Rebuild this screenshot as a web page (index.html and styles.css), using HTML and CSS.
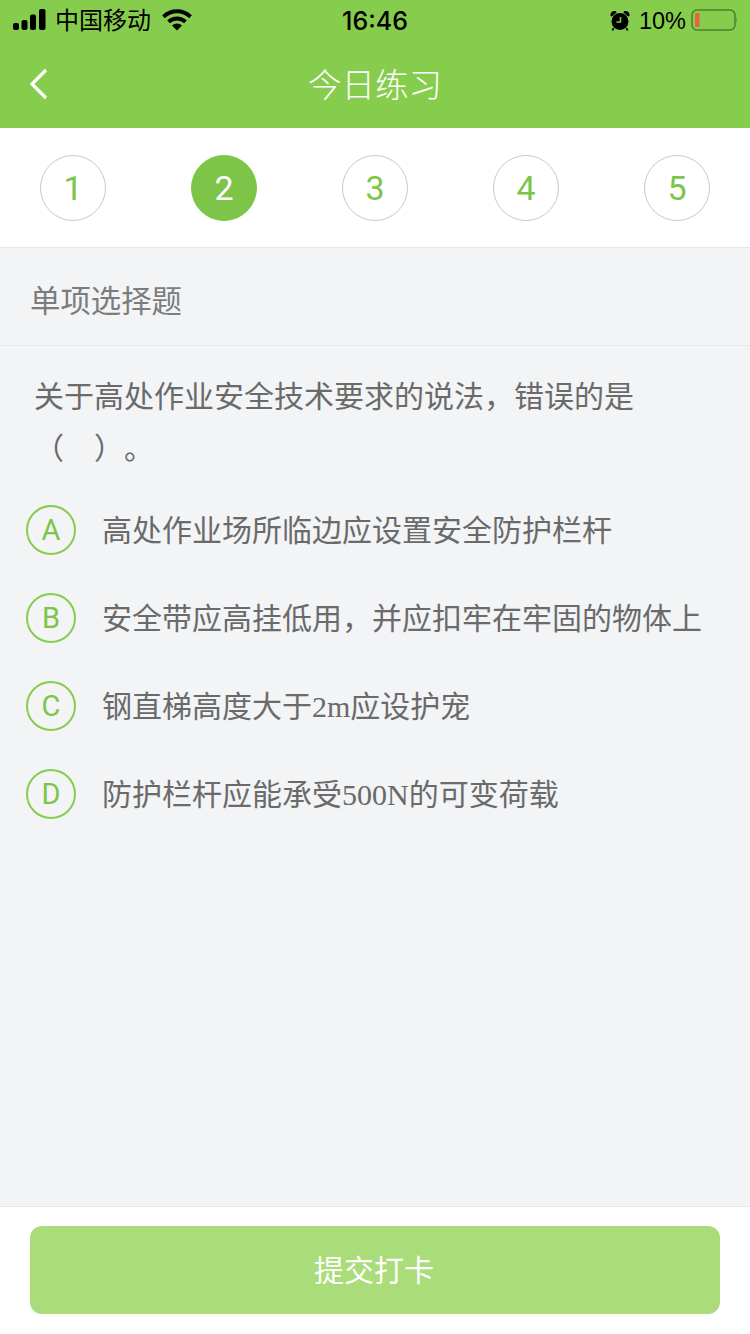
FILE: index.html
```html
<!DOCTYPE html>
<html lang="zh-CN">
<head>
    <meta charset="UTF-8">
    <meta name="viewport" content="width=device-width, initial-scale=1.0">
    <title>今日练习</title>
    <link rel="stylesheet" href="styles.css">
</head>
<body>
    <div class="page">
        <div class="header">
            <div class="status">
                <div class="status_left">
                    <svg class="signal" width="34" height="22" viewBox="0 0 34 22">
                        <rect x="0" y="14" width="6" height="7" rx="2"/>
                        <rect x="8.500" y="11" width="6" height="10" rx="2"/>
                        <rect x="17" y="5.500" width="6" height="15.500" rx="2"/>
                        <rect x="26" y="0" width="6.500" height="21" rx="2"/>
                    </svg>
                    <span class="carrier">中国移动</span>
                    <svg class="wifi" width="30" height="22" viewBox="0 0 30 22">
                        <path d="M1.500 7.800C9.500 .5 20.500 .5 28.500 7.800" fill="none" stroke="#000" stroke-width="4"/>
                        <path d="M6.500 12.800C11.500 8.300 18.500 8.300 23.500 12.800" fill="none" stroke="#000" stroke-width="4"/>
                        <path d="M10 16.500C13 13.800 17 13.800 20 16.500L15 21.500Z"/>
                    </svg>
                </div>
                <div class="time">16:46</div>
                <div class="status_right">
                    <svg class="alarm" width="20" height="21" viewBox="0 0 20 21">
                        <circle cx="10" cy="11.500" r="8.500"/>
                        <path d="M.5 6C0 2.500 2.500 .5 6 1L6.500 2.500 2 6.500Z"/>
                        <path d="M19.500 6C20 2.500 17.500 .5 14 1L13.500 2.500 18 6.500Z"/>
                        <path d="M3.500 18L2.500 20.500M16.500 18L17.500 20.500" stroke="#000" stroke-width="1.800"/>
                        <path d="M10.500 7V12H6.500" fill="none" stroke="#87cd4d" stroke-width="1.500"/>
                    </svg>
                    <span class="percent">10%</span>
                    <svg class="battery" width="46" height="22" viewBox="0 0 46 22">
                        <rect x="1" y="1" width="43" height="20" rx="5" fill="none" stroke="#4f7f2c" stroke-width="1.500"/>
                        <rect x="4" y="4" width="4.500" height="14" rx="1" fill="#e8643c"/>
                        <path d="M45.500 8C46.500 9 46.500 13 45.500 14Z" fill="#4f7f2c"/>
                    </svg>
                </div>
            </div>
            <div class="nav">
                <svg class="back" width="20" height="32" viewBox="0 0 20 32">
                    <path d="M17 2L3 16 17 30" fill="none" stroke="#fff" stroke-width="3.200"/>
                </svg>
                <div class="nav_title">今日练习</div>
            </div>
        </div>

        <div class="steps">
            <div class="step">1</div>
            <div class="step active">2</div>
            <div class="step">3</div>
            <div class="step">4</div>
            <div class="step">5</div>
        </div>

        <div class="main">
            <div class="type">单项选择题</div>
            <div class="question">关于高处作业安全技术要求的说法，错误的是<br>（　）。</div>
            <div class="options">
                <div class="option">
                    <div class="letter">A</div>
                    <div class="option_text">高处作业场所临边应设置安全防护栏杆</div>
                </div>
                <div class="option">
                    <div class="letter">B</div>
                    <div class="option_text">安全带应高挂低用，并应扣牢在牢固的物体上</div>
                </div>
                <div class="option">
                    <div class="letter">C</div>
                    <div class="option_text">钢直梯高度大于<span class="num">2m</span>应设护宠</div>
                </div>
                <div class="option">
                    <div class="letter">D</div>
                    <div class="option_text">防护栏杆应能承受<span class="num">500N</span>的可变荷载</div>
                </div>
            </div>
        </div>

        <div class="footer">
            <div class="submit">提交打卡</div>
        </div>
    </div>
</body>
</html>
```

FILE: styles.css
```css
*{
    box-sizing: border-box;
}
body{
    margin: 0;
    font-family: "Liberation Sans", "Noto Sans CJK SC", sans-serif;
    background: #f2f4f6;
}
.page{
    width: 750px;
    height: 1334px;
    display: flex;
    flex-direction: column;
    overflow: hidden;
}
.header{
    height: 128px;
    background: #87cd4d;
}
.status{
    height: 40px;
    padding: 0 13px;
    display: flex;
    align-items: center;
    color: #000;
}
.status_left,.status_right{
    flex: 1;
    display: flex;
    align-items: center;
}
.status_right{
    justify-content: flex-end;
}
.carrier{
    margin-left: 8px;
    padding-bottom: 4px;
    font-size: 24px;
}
.wifi{
    margin-left: 11px;
}
.time{
    width: 66px;
    padding-top: 2px;
    font-family: Inter, "Liberation Sans", sans-serif;
    font-size: 25px;
    font-weight: 500;
    text-align: center;
    white-space: nowrap;
}
.alarm{
    margin-right: 9px;
}
.percent{
    padding-top: 2px;
    font-size: 23.500px;
    margin-right: 5px;
}
.nav{
    height: 88px;
    padding: 0 0 0 29px;
    display: grid;
    grid-template-columns: 1fr auto 1fr;
    align-items: center;
    margin-right: 29px;
}
.nav_title{
    padding-bottom: 4px;
    font-size: 33.500px;
    color: #fff;
    font-weight: 300;
}
.steps{
    height: 120px;
    padding: 0 40px;
    background: #fff;
    border-bottom: 1px solid #e6e8ea;
    display: flex;
    justify-content: space-between;
    align-items: center;
}
.step{
    width: 66px;
    height: 66px;
    border: 1px solid #c9c9c9;
    border-radius: 50%;
    display: flex;
    justify-content: center;
    align-items: center;
    font-family: Roboto, "Liberation Sans", sans-serif;
    font-size: 34px;
    color: #7dc548;
}
.step.active{
    background: #7dc548;
    border-color: #7dc548;
    color: #fff;
}
.main{
    flex: 1;
}
.type{
    height: 98px;
    padding: 4px 0 0 30px;
    border-bottom: 1px solid #e6e8ea;
    display: flex;
    align-items: center;
    font-size: 30.400px;
    color: #7c7c7c;
}
.question{
    padding: 25px 34px 0;
    font-size: 30px;
    line-height: 52px;
    color: #6a6a6a;
    text-spacing-trim: space-all;
}
.options{
    margin-top: 11px;
    padding-left: 26px;
}
.option{
    height: 88px;
    display: flex;
    align-items: center;
}
.letter{
    width: 50px;
    height: 50px;
    border: 2px solid #87cd4d;
    border-radius: 50%;
    display: flex;
    justify-content: center;
    align-items: center;
    font-family: Roboto, "Liberation Sans", sans-serif;
    font-size: 29px;
    color: #7dc548;
}
.option_text{
    margin-left: 26px;
    padding-bottom: 4px;
    font-size: 30px;
    color: #6a6a6a;
    text-spacing-trim: space-all;
}
.num{
    font-family: "Liberation Serif", serif;
}
.footer{
    height: 128px;
    padding: 19px 30px 0;
    background: #fff;
    border-top: 1px solid #e6e8ea;
}
.submit{
    height: 88px;
    padding: 0 2px 4px 0;
    border-radius: 12px;
    background: #aadc7a;
    display: flex;
    justify-content: center;
    align-items: center;
    font-size: 30px;
    color: #fff;
}
```
